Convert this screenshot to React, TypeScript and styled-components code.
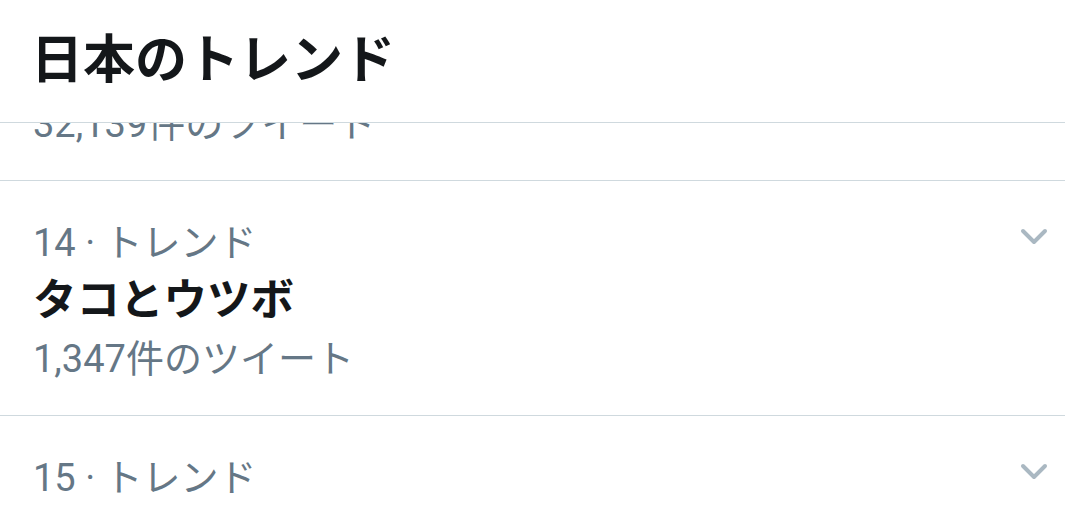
import React from "react";
import styled, { createGlobalStyle } from "styled-components";

const GlobalStyle = createGlobalStyle`
  html, body {
    margin: 0;
    padding: 0;
    background: #ffffff;
  }
  body {
    font-family: Roboto, "Noto Sans CJK JP", "Noto Sans", sans-serif;
    color: #14171a;
    overflow: hidden;
  }
`;

const Page = styled.div`
  width: 1065px;
  height: 512px;
  overflow: hidden;
  background: #ffffff;
`;

const Header = styled.header`
  position: sticky;
  top: 0;
  z-index: 2;
  height: 123px;
  box-sizing: border-box;
  padding: 0 31px;
  display: flex;
  align-items: center;
  background: #ffffff;
  border-bottom: 1px solid #cfd9de;
`;

const HeaderTitle = styled.h1`
  margin: 0;
  font-size: 52px;
  line-height: 122px;
  font-weight: 700;
  color: #14171a;
`;

const List = styled.ul<{ $offset: number }>`
  list-style: none;
  margin: ${(p) => -p.$offset}px 0 0;
  padding: 0;
`;

const Row = styled.li`
  display: flex;
  align-items: flex-start;
  box-sizing: border-box;
  height: 235px;
  padding: 36px 16px 30px 33px;
  border-bottom: 1px solid #cfd9de;
`;

const Body = styled.div`
  flex: 1;
  display: flex;
  flex-direction: column;
  min-width: 0;
`;

const Meta = styled.div`
  font-size: 38px;
  line-height: 52px;
  color: #657786;
  white-space: nowrap;
`;

const Name = styled.div`
  font-size: 43.5px;
  line-height: 64px;
  font-weight: 700;
  color: #14171a;
  white-space: nowrap;
`;

const Count = styled.div`
  font-size: 38px;
  line-height: 52px;
  color: #657786;
  white-space: nowrap;
`;

const Caret = styled.button`
  flex: none;
  margin-top: 10px;
  width: 30px;
  height: 20px;
  padding: 0;
  border: 0;
  background: transparent;
  display: flex;
  color: #aab8c2;
`;

const Chevron = () => (
  <svg width="30" height="20" viewBox="0 0 30 20" fill="none">
    <polyline
      points="4,4 15,15 26,4"
      stroke="currentColor"
      strokeWidth="4"
      strokeLinecap="round"
      strokeLinejoin="round"
    />
  </svg>
);

type Trend = { rank: number; name: string; count: string };

const trends: Trend[] = [
  { rank: 13, name: "ウツボ", count: "32,139件のツイート" },
  { rank: 14, name: "タコとウツボ", count: "1,347件のツイート" },
  { rank: 15, name: "タコ", count: "5,210件のツイート" },
];

export default function App() {
  return (
    <Page>
      <GlobalStyle />
      <Header>
        <HeaderTitle>日本のトレンド</HeaderTitle>
      </Header>
      <List $offset={177}>
        {trends.map((t) => (
          <Row key={t.rank}>
            <Body>
              <Meta>{t.rank} · トレンド</Meta>
              <Name>{t.name}</Name>
              <Count>{t.count}</Count>
            </Body>
            <Caret aria-label="その他">
              <Chevron />
            </Caret>
          </Row>
        ))}
      </List>
    </Page>
  );
}
